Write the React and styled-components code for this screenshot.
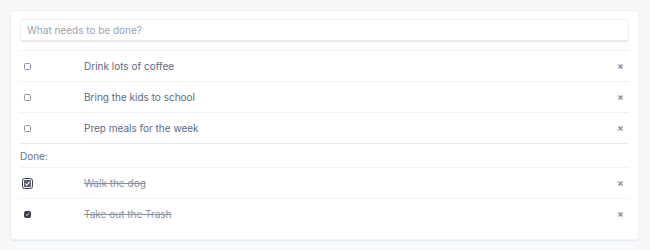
import styled, { createGlobalStyle, css } from 'styled-components';

const GlobalStyle = createGlobalStyle`
  html, body {
    margin: 0;
    padding: 0;
    background: #f7f8fa;
    font-family: Inter, "Noto Sans", sans-serif;
  }
`;

const todos = [
  { id: 1, text: 'Drink lots of coffee', done: false },
  { id: 2, text: 'Bring the kids to school', done: false },
  { id: 3, text: 'Prep meals for the week', done: false },
  { id: 4, text: 'Walk the dog', done: true, focused: true },
  { id: 5, text: 'Take out the Trash', done: true },
];

function TodoRow({ todo, last }) {
  return (
    <Row $done={todo.done} $last={last}>
      <CheckCell>
        <Check type="checkbox" defaultChecked={todo.done} $focused={todo.focused} />
      </CheckCell>
      <Label $done={todo.done}>{todo.text}</Label>
      <Remove aria-label="remove">
        <svg width="5" height="5" viewBox="0 0 5 5">
          <path d="M0.5 0.5 L4.5 4.5 M4.5 0.5 L0.5 4.5" stroke="#7d879a" strokeWidth="1.2" />
        </svg>
      </Remove>
    </Row>
  );
}

function App() {
  const open = todos.filter((t) => !t.done);
  const done = todos.filter((t) => t.done);

  return (
    <Page>
      <GlobalStyle />
      <Card>
        <NewTodo placeholder="What needs to be done?" />
        <List>
          {open.map((todo) => (
            <TodoRow key={todo.id} todo={todo} />
          ))}
        </List>
        <DoneHeading>Done:</DoneHeading>
        <List $done>
          {done.map((todo, i) => (
            <TodoRow key={todo.id} todo={todo} last={i === done.length - 1} />
          ))}
        </List>
      </Card>
    </Page>
  );
}

const Page = styled.div`
  padding: 10px 11px 12px 10px;
`;

const Card = styled.section`
  background: #fff;
  border: 1px dotted #e4e7ec;
  border-radius: 4px;
  box-shadow: 0 1px 1px #e6e9ee;
  padding: 8px 9px 10px 9px;
`;

const NewTodo = styled.input`
  display: block;
  box-sizing: border-box;
  width: 100%;
  height: 23px;
  margin-bottom: 8px;
  padding: 0 6px;
  border: 1px dotted #dfe3e8;
  border-bottom: 2px solid #e6e9ee;
  border-radius: 3px;
  font: inherit;
  font-size: 10px;
  color: #5a6478;
  outline: none;

  &::placeholder {
    color: #9ba3b1;
  }
`;

const List = styled.ul`
  list-style: none;
  margin: 0;
  padding: 0;
  border-top: 1px ${(p) => (p.$done ? 'solid #f1f3f6' : 'dotted #e2e5ea')};
`;

const Row = styled.li`
  display: flex;
  align-items: center;
  height: 30px;
  border-bottom: ${(p) =>
    p.$last ? 'none' : p.$done ? '1px solid #f1f3f6' : '1px dotted #e2e5ea'};

  &:last-child {
    border-bottom-style: ${(p) => (p.$done ? 'none' : 'solid')};
    border-bottom-color: #e6e9ee;
  }
`;

const CheckCell = styled.div`
  width: 60px;
  display: flex;
  align-items: center;
  padding-left: 4px;
`;

const Check = styled.input`
  appearance: none;
  box-sizing: border-box;
  width: 7px;
  height: 7px;
  margin: 0;
  border: 1px solid #8d94a1;
  border-radius: 1.5px;
  background: #fff;

  &:checked {
    border-color: #3d424c;
    background: #3d424c
      url("data:image/svg+xml,%3Csvg xmlns='http://www.w3.org/2000/svg' viewBox='0 0 8 8'%3E%3Cpath d='M1.5 4.2 L3.2 5.8 L6.5 2' fill='none' stroke='white' stroke-width='1.3'/%3E%3C/svg%3E")
      center / 100% 100% no-repeat;
  }

  ${(p) =>
    p.$focused &&
    css`
      width: 9px;
      height: 9px;
      margin-left: -1px;
      outline: 1.5px solid #3d424c;
      outline-offset: 0.5px;
      &:checked {
        border-color: #fff;
        background-color: #5a606b;
      }
    `}
`;

const Label = styled.span`
  flex: 1;
  font-size: 10px;
  color: ${(p) => (p.$done ? '#8a92a0' : '#5f6a7d')};
  text-decoration: ${(p) => (p.$done ? 'line-through' : 'none')};
`;

const Remove = styled.button`
  display: flex;
  border: none;
  background: none;
  padding: 0 6px 0 0;
`;

const DoneHeading = styled.div`
  height: 23px;
  display: flex;
  align-items: center;
  font-size: 10px;
  color: #6b7587;
`;

export default App;
